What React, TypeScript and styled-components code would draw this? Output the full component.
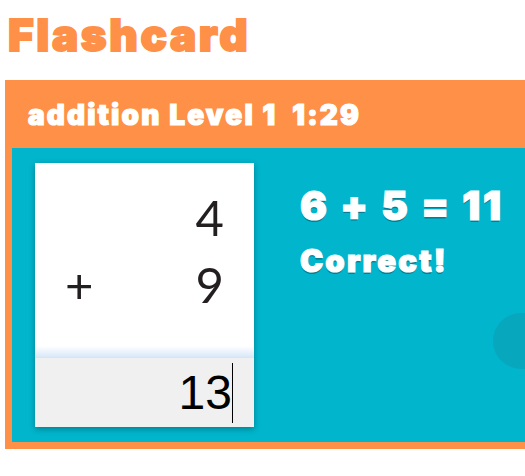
import React from "react";
import styled, { createGlobalStyle } from "styled-components";

const Global = createGlobalStyle`
  html, body { margin: 0; padding: 0; background: #fff; overflow: hidden; }
  body { width: 525px; height: 476px; }
`;

const heavy = `"Inter", "Liberation Sans", sans-serif`;

const Page = styled.main`
  width: 525px;
  height: 476px;
  overflow: hidden;
  padding-left: 5px;
  box-sizing: border-box;
`;

const Title = styled.h1`
  margin: 0;
  height: 80px;
  padding: 9px 0 0 3px;
  box-sizing: border-box;
  font: 900 44px/52px ${heavy};
  color: #ff9047;
  -webkit-text-stroke: 1.8px #ff9047;
  letter-spacing: 2.6px;
`;

const Panel = styled.section`
  position: relative;
  width: 560px;
  height: 369px;
  background: #ff9047;
  display: flex;
  flex-direction: column;
  overflow: hidden;
`;

const Header = styled.header`
  height: 68px;
  flex: none;
  padding: 2px 0 0 23px;
  box-sizing: border-box;
  display: flex;
  align-items: center;
  gap: 15px;
  font: 900 28px/32px ${heavy};
  color: #fff;
  -webkit-text-stroke: 1.2px #fff;
  letter-spacing: 2.15px;
`;

const Stage = styled.div`
  flex: 1;
  margin: 0 0 7px 7px;
  background: #00b5cc;
  display: flex;
  align-items: flex-start;
  padding: 15px 0 0 23px;
`;

const Card = styled.div`
  width: 219px;
  height: 264px;
  flex: none;
  background: #fff;
  box-shadow: 0 2px 6px rgba(0, 0, 0, 0.3);
  display: flex;
  flex-direction: column;
`;

const Sum = styled.div`
  flex: 1;
  padding: 21px 30px 0;
  display: grid;
  grid-template-columns: 1fr auto;
  grid-auto-rows: 67px;
  align-items: center;
  font: 400 49px/67px "Lato", "Liberation Sans", sans-serif;
  color: #231f20;
  background: linear-gradient(to bottom, #fff calc(100% - 12px), #d5e6f6 100%);
`;

const Digit = styled.span`
  grid-column: 2;
  text-align: right;
`;

const Operator = styled.span`
  grid-column: 1;
`;

const Answer = styled.div`
  height: 69px;
  flex: none;
  background: #f0f0f0;
  box-shadow: 0 -1px 0 #e3e3e3;
  display: flex;
  align-items: center;
  justify-content: flex-end;
  padding-right: 21px;
  font: 400 48px/56px "Liberation Sans", sans-serif;
  color: #000;
`;

const Caret = styled.span`
  width: 1px;
  height: 60px;
  background: #000;
`;

const Feedback = styled.div`
  margin-left: 46px;
  padding-top: 20px;
  color: #fff;
  font-family: ${heavy};
  font-weight: 900;
  text-shadow: 0 2px 0 #067d90;
  -webkit-text-stroke: 1.2px #fff;
`;

const Equation = styled.div`
  font-size: 40px;
  line-height: 46px;
  letter-spacing: 2.65px;
`;

const Verdict = styled.div`
  margin-top: 14px;
  font-size: 31px;
  line-height: 36px;
  letter-spacing: 2.2px;
`;

const Blob = styled.span`
  position: absolute;
  left: 488px;
  top: 233px;
  width: 56px;
  height: 56px;
  border-radius: 50%;
  background: #07a8bd;
`;

export default function App() {
  return (
    <Page>
      <Global />
      <Title>Flashcard</Title>
      <Panel>
        <Header>
          <span>addition Level 1</span>
          <span>1:29</span>
        </Header>
        <Stage>
          <Card>
            <Sum>
              <Digit>4</Digit>
              <Operator>+</Operator>
              <Digit>9</Digit>
            </Sum>
            <Answer>
              13
              <Caret />
            </Answer>
          </Card>
          <Feedback>
            <Equation>6 + 5 = 11</Equation>
            <Verdict>Correct!</Verdict>
          </Feedback>
        </Stage>
        <Blob />
      </Panel>
    </Page>
  );
}
